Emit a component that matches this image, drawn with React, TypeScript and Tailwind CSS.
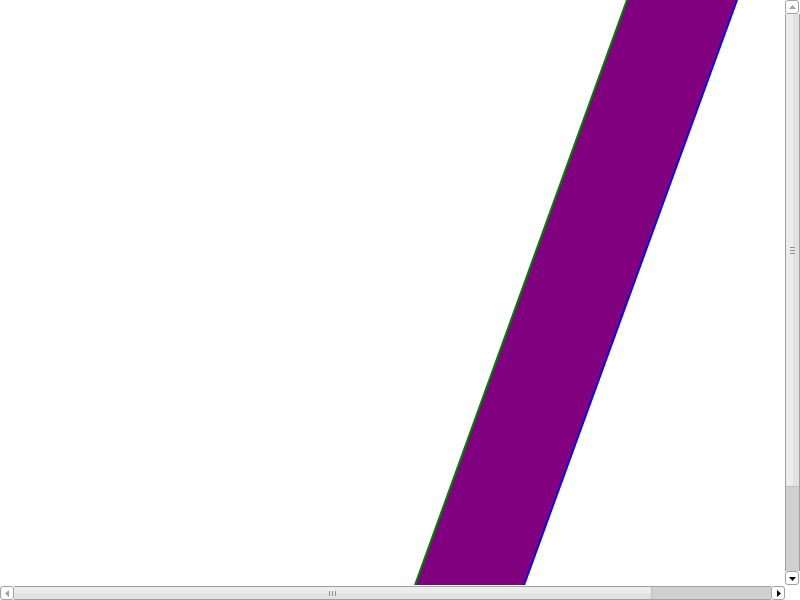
import React from "react";

const Arrow = ({ dir, active }: { dir: "up" | "down" | "left" | "right"; active: boolean }) => {
  const pts = {
    up: "1,6 4.5,2 8,6",
    down: "1,3 4.5,7 8,3",
    left: "6,1 2,4.5 6,8",
    right: "3,1 7,4.5 3,8",
  }[dir];
  return (
    <svg width="9" height="9" viewBox="0 0 9 9">
      <polygon points={pts} fill={active ? "#000000" : "#a3a3a3"} />
    </svg>
  );
};

const ScrollButton = ({ dir, active }: { dir: "up" | "down" | "left" | "right"; active: boolean }) => (
  <div className="w-[14px] h-[14px] shrink-0 flex items-center justify-center bg-white border border-[#a0a0a0] rounded-[3px]">
    <Arrow dir={dir} active={active} />
  </div>
);

export default function App() {
  return (
    <div className="w-[800px] h-[600px] flex flex-col bg-white overflow-hidden">
      <div className="flex flex-1 min-h-0">
        {/* canvas */}
        <div className="flex-1 relative overflow-hidden">
          <svg width="785" height="585" className="absolute left-0 top-0">
            <polygon points="627,0 737,0 524,585 415,585" fill="#800080" />
            <line x1="627" y1="0" x2="415" y2="585" stroke="#008000" strokeWidth="2" />
            <line x1="737" y1="0" x2="524" y2="585" stroke="#0000ff" strokeWidth="2" />
          </svg>
        </div>

        {/* vertical scrollbar */}
        <div className="w-[15px] flex flex-col">
          <ScrollButton dir="up" active={false} />
          <div className="flex-1 flex flex-col border-x border-[#a0a0a0]">
            <div className="h-[472px] flex items-center justify-center bg-[linear-gradient(to_right,#ececec_50%,#e2e2e2_50%)]">
              <div className="flex flex-col gap-[2px]">
                <div className="w-[5px] h-px bg-[#909090]" />
                <div className="w-[5px] h-px bg-[#909090]" />
                <div className="w-[5px] h-px bg-[#909090]" />
              </div>
            </div>
            <div className="flex-1 bg-[#d0d0d0] border-t border-[#c0c0c0]" />
          </div>
          <ScrollButton dir="down" active={true} />
        </div>
      </div>

      {/* horizontal scrollbar */}
      <div className="h-[15px] flex">
        <div className="flex-1 flex pt-px">
          <ScrollButton dir="left" active={false} />
          <div className="flex-1 flex border-y border-[#a0a0a0]">
            <div className="w-[637px] flex items-center justify-center bg-[linear-gradient(to_bottom,#ececec_50%,#e2e2e2_50%)]">
              <div className="flex gap-[2px]">
                <div className="w-px h-[5px] bg-[#909090]" />
                <div className="w-px h-[5px] bg-[#909090]" />
                <div className="w-px h-[5px] bg-[#909090]" />
              </div>
            </div>
            <div className="flex-1 bg-[#d0d0d0] border-l border-[#c0c0c0]" />
          </div>
          <ScrollButton dir="right" active={true} />
        </div>
        <div className="w-[15px] bg-white" />
      </div>
    </div>
  );
}
